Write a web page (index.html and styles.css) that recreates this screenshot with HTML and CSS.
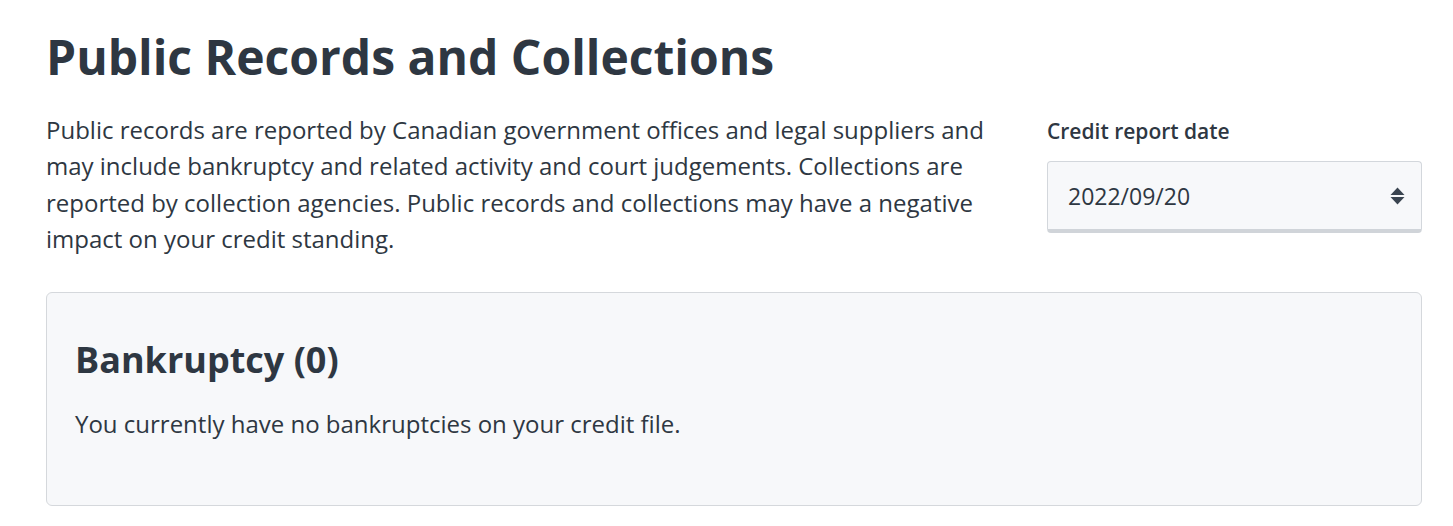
FILE: index.html
```html
<!DOCTYPE html>
<html lang="en">
<head>
<meta charset="utf-8">
<title>Public Records and Collections</title>
<link rel="stylesheet" href="styles.css">
</head>
<body>
<main class="page">
  <h1 class="title">Public Records and Collections</h1>
  <div class="intro">
    <p class="lead">Public records are reported by Canadian government offices and legal suppliers and may include bankruptcy and related activity and court judgements. Collections are reported by collection agencies. Public records and collections may have a negative impact on your credit standing.</p>
    <div class="date-field">
      <label class="date-label" for="report-date">Credit report date</label>
      <div class="select">
        <span class="select-value" id="report-date">2022/09/20</span>
        <svg class="select-arrows" width="15" height="18" viewBox="0 0 15 18" aria-hidden="true">
          <path d="M7.5 0.5 L14.5 8 H0.5 Z" fill="#3a4450"/>
          <path d="M7.5 17.5 L14.5 10 H0.5 Z" fill="#3a4450"/>
        </svg>
      </div>
    </div>
  </div>
  <section class="card">
    <h2 class="card-title">Bankruptcy (0)</h2>
    <p class="card-text">You currently have no bankruptcies on your credit file.</p>
  </section>
</main>
</body>
</html>
```

FILE: styles.css
```css
* { box-sizing: border-box; }
html, body { margin: 0; padding: 0; background: #ffffff; }
body {
  font-family: "Open Sans", "Noto Sans", sans-serif;
  color: #2e3742;
}
.page {
  padding: 24px 31px 0 46px;
}
.title {
  margin: 0;
  font-size: 48px;
  font-weight: 700;
  line-height: 66px;
  color: #2e3742;
}
.intro {
  display: flex;
  justify-content: space-between;
  align-items: flex-start;
  margin-top: 22px;
}
.lead {
  margin: 0;
  width: 960px;
  font-size: 24px;
  line-height: 36.4px;
}
.date-field {
  width: 375px;
  display: flex;
  flex-direction: column;
  padding-top: 5px;
}
.date-label {
  font-size: 21px;
  font-weight: 600;
  line-height: 28px;
  margin-bottom: 16px;
}
.select {
  height: 72px;
  display: flex;
  align-items: center;
  justify-content: space-between;
  padding: 0 16px 0 20px;
  background: #f7f8fa;
  border: 1px solid #d3d7dc;
  border-bottom: 4px solid #d0d4d9;
  border-radius: 4px;
}
.select-value {
  font-size: 23px;
  color: #2e3742;
}
.card {
  margin-top: 34px;
  height: 214px;
  background: #f7f8fa;
  border: 1px solid #d5d8dc;
  border-radius: 6px;
  padding: 41px 28px;
}
.card-title {
  margin: 0;
  font-size: 36px;
  font-weight: 700;
  line-height: 52px;
}
.card-text {
  margin: 22px 0 0;
  font-size: 24px;
  line-height: 32px;
}
```
